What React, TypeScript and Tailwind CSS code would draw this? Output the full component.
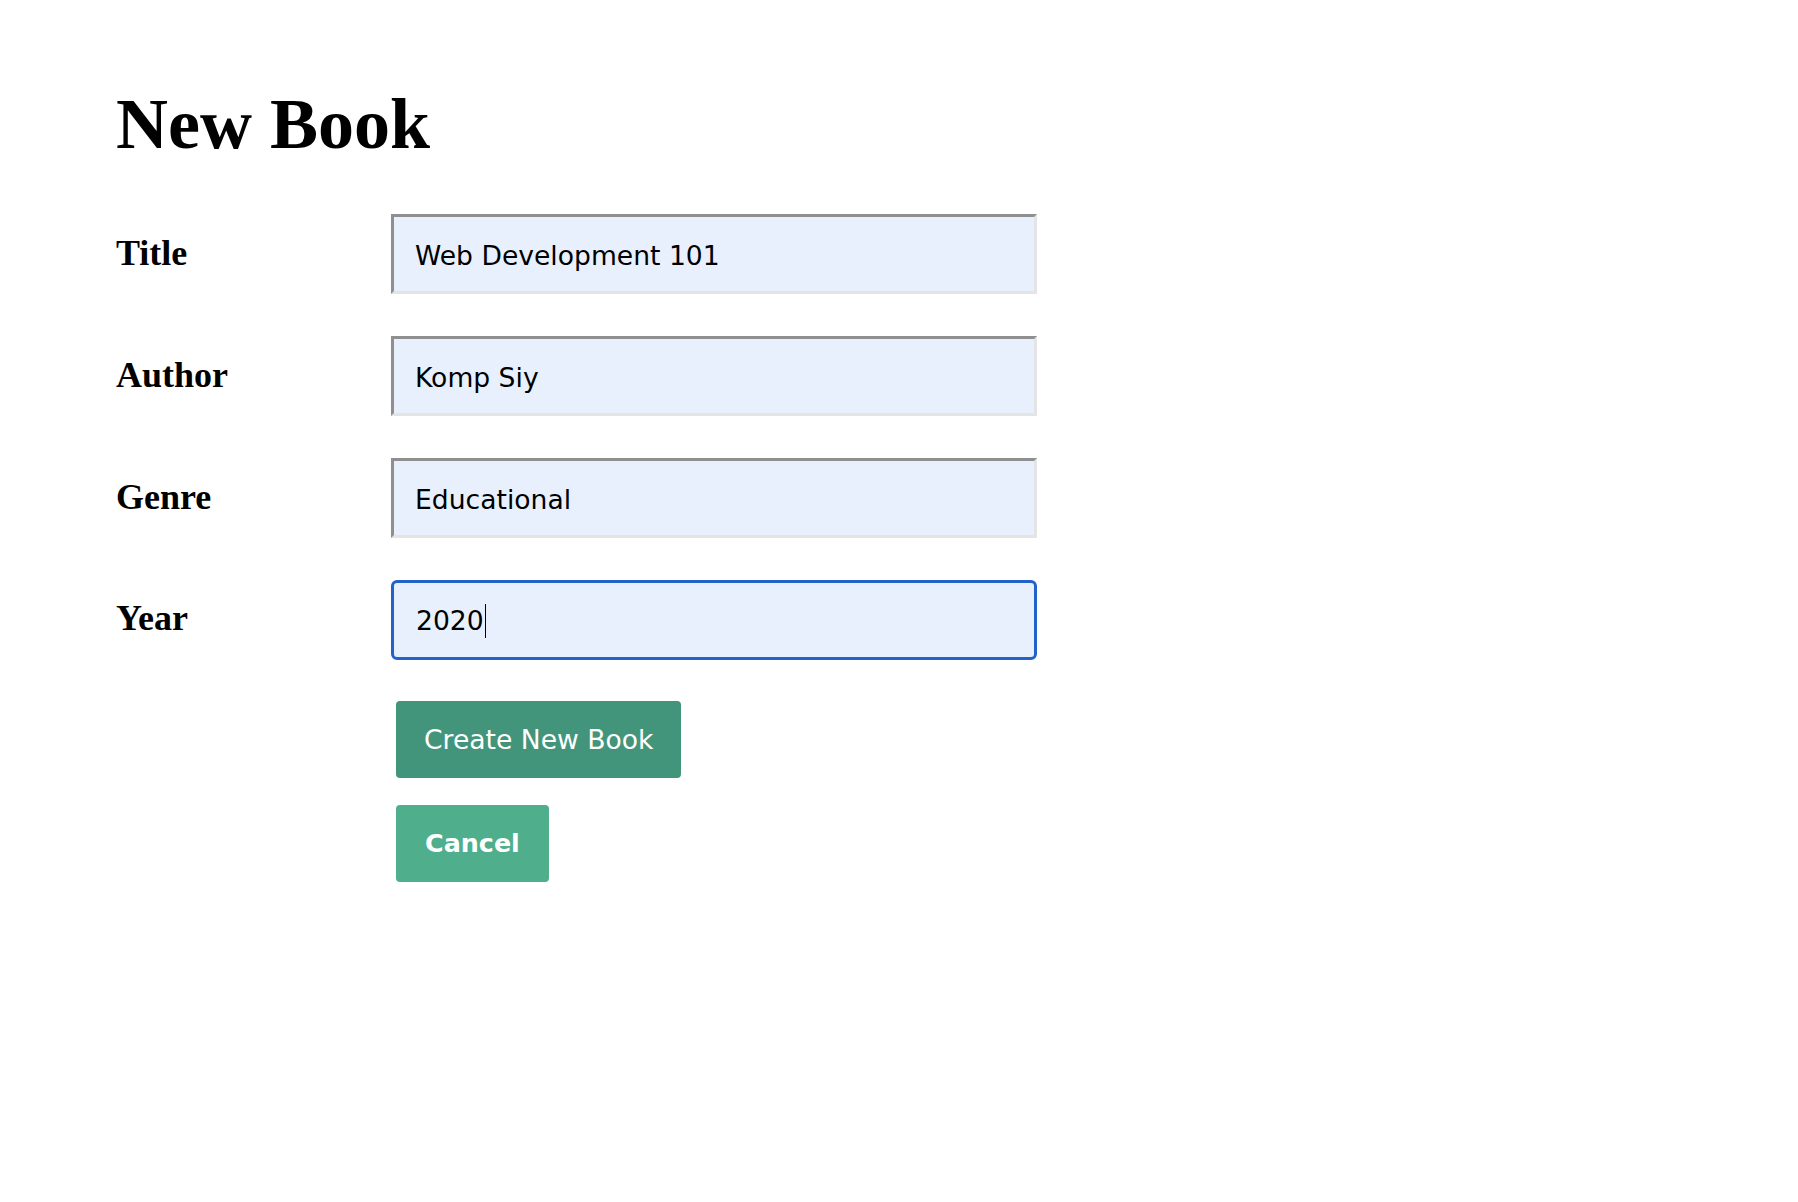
import React from 'react'

type Field = {
  label: string
  value: string
  focused?: boolean
}

const fields: Field[] = [
  { label: 'Title', value: 'Web Development 101' },
  { label: 'Author', value: 'Komp Siy' },
  { label: 'Genre', value: 'Educational' },
  { label: 'Year', value: '2020', focused: true },
]

const FieldRow = ({ label, value, focused }: Field) => {
  return (
    <div className="flex flex-row items-baseline">
      <label className="w-[275px] shrink-0 font-['Liberation_Serif',serif] text-[36px] font-bold text-black">
        {label}
      </label>
      {focused ? (
        <div className="flex h-[80px] w-[646px] items-center rounded-[6px] border-[3px] border-[#2262c9] bg-[#e8f0fe] pt-[2px] pl-[22px] font-['DejaVu_Sans',sans-serif] text-[26.6px] text-black">
          <span>{value}</span>
          <span className="ml-[1px] h-[34px] w-[1.5px] bg-black" />
        </div>
      ) : (
        <input
          readOnly
          value={value}
          className="h-[80px] w-[646px] border-[3px] border-t-[#8f8f8f] border-l-[#8f8f8f] border-r-[#e4e4e4] border-b-[#e4e4e4] bg-[#e8f0fe] pt-[2px] pl-[21px] font-['DejaVu_Sans',sans-serif] text-[26.6px] text-black outline-none"
        />
      )}
    </div>
  )
}

const App = () => {
  return (
    <div className="min-h-screen bg-white pl-[116px] pt-[84px]">
      <h1 className="font-['Liberation_Serif',serif] text-[72px] leading-[80px] font-bold text-black">
        New Book
      </h1>
      <form className="mt-[50px] flex flex-col gap-[42px]">
        {fields.map((f) => (
          <FieldRow key={f.label} {...f} />
        ))}
      </form>
      <div className="mt-[41px] ml-[280px] flex flex-col items-start gap-[27px] font-['DejaVu_Sans',sans-serif] text-[26.6px] text-white">
        <button className="h-[77px] rounded-[4px] bg-[#42957a] px-[28px]">Create New Book</button>
        <button className="h-[77px] rounded-[4px] bg-[#4fae8b] px-[29px] text-[25.4px] font-bold">Cancel</button>
      </div>
    </div>
  )
}

export default App
